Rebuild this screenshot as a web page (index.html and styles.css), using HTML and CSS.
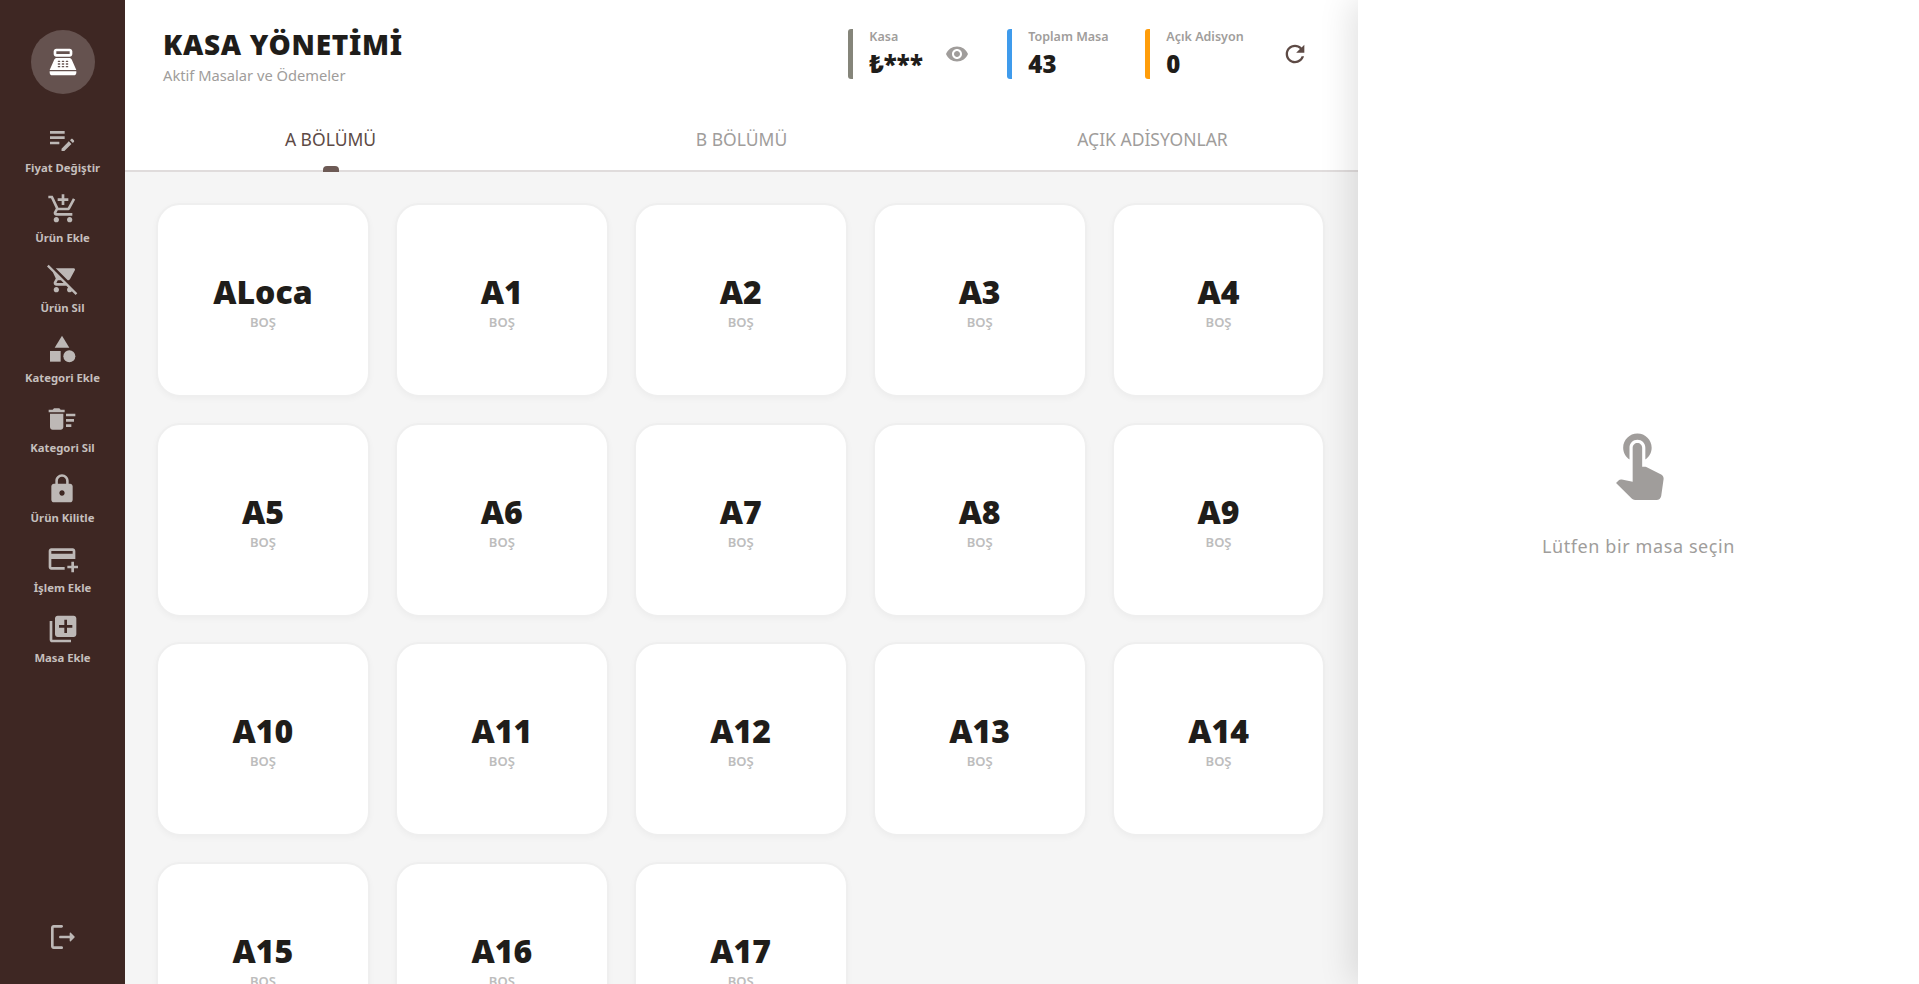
FILE: index.html
```html
<!DOCTYPE html>
<html lang="tr">

<head>
    <meta charset="UTF-8">
    <meta name="viewport" content="width=device-width, initial-scale=1.0">
    <title>Kasa Yönetimi</title>
    <link rel="stylesheet" href="styles.css">
</head>

<body>
    <nav class="sidebar">
        <div class="avatar">
            <svg viewBox="0 0 24 24"><path fill-rule="evenodd" d="M17 2H7c-1.1 0-2 .9-2 2v2c0 1.1.9 2 2 2h10c1.1 0 2-.9 2-2V4c0-1.1-.9-2-2-2zm0 4H7V4h10v2zm3 16H4c-1.1 0-2-.9-2-2v-1h20v1c0 1.1-.9 2-2 2zm-1.47-11.81C18.21 9.47 17.49 9 16.7 9H7.3c-.79 0-1.51.47-1.83 1.19L2 18h20l-3.47-7.81zM9.5 16h-1c-.28 0-.5-.22-.5-.5s.22-.5.5-.5h1c.28 0 .5.22.5.5s-.22.5-.5.5zm0-2h-1c-.28 0-.5-.22-.5-.5s.22-.5.5-.5h1c.28 0 .5.22.5.5s-.22.5-.5.5zm0-2h-1c-.28 0-.5-.22-.5-.5s.22-.5.5-.5h1c.28 0 .5.22.5.5s-.22.5-.5.5zm3 4h-1c-.28 0-.5-.22-.5-.5s.22-.5.5-.5h1c.28 0 .5.22.5.5s-.22.5-.5.5zm0-2h-1c-.28 0-.5-.22-.5-.5s.22-.5.5-.5h1c.28 0 .5.22.5.5s-.22.5-.5.5zm0-2h-1c-.28 0-.5-.22-.5-.5s.22-.5.5-.5h1c.28 0 .5.22.5.5s-.22.5-.5.5zm3 4h-1c-.28 0-.5-.22-.5-.5s.22-.5.5-.5h1c.28 0 .5.22.5.5s-.22.5-.5.5zm0-2h-1c-.28 0-.5-.22-.5-.5s.22-.5.5-.5h1c.28 0 .5.22.5.5s-.22.5-.5.5zm0-2h-1c-.28 0-.5-.22-.5-.5s.22-.5.5-.5h1c.28 0 .5.22.5.5s-.22.5-.5.5z"/></svg>
        </div>
        <a class="nav-item">
            <svg viewBox="0 0 24 24"><path d="M3 10h11v2H3zm0-2h11V6H3zm0 8h7v-2H3zm15.01-3.13.71-.71c.39-.39 1.02-.39 1.41 0l.71.71c.39.39.39 1.02 0 1.41l-.71.71-2.12-2.12zm-1.06 1.06-5.3 5.3V21h2.12l5.3-5.3-2.12-2.12z"/></svg>
            <span>Fiyat Değiştir</span>
        </a>
        <a class="nav-item">
            <svg viewBox="0 0 24 24"><path d="M11 9h2V6h3V4h-3V1h-2v3H8v2h3v3zm-4 9c-1.1 0-1.99.9-1.99 2S5.9 22 7 22s2-.9 2-2-.9-2-2-2zm10 0c-1.1 0-1.99.9-1.99 2s.89 2 1.99 2 2-.9 2-2-.9-2-2-2zm-9.83-3.25l.03-.12.9-1.63h7.45c.75 0 1.41-.41 1.75-1.03l3.86-7.01L19.42 4h-.01l-1.1 2-2.76 5H8.53l-.13-.27L6.16 6l-.95-2-.94-2H1v2h2l3.6 7.59-1.35 2.45c-.16.28-.25.61-.25.96 0 1.1.9 2 2 2h12v-2H7.42c-.13 0-.25-.11-.25-.25z"/></svg>
            <span>Ürün Ekle</span>
        </a>
        <a class="nav-item">
            <svg viewBox="0 0 24 24"><path d="M22.73 22.73 2.77 2.77 2 2l-.73-.73L0 2.54l4.39 4.39 2.21 4.66-1.35 2.45c-.16.28-.25.61-.25.96 0 1.1.9 2 2 2h7.46l1.38 1.38c-.5.36-.83.95-.83 1.62 0 1.1.89 2 1.99 2 .67 0 1.26-.33 1.62-.84L21.46 24l1.27-1.27zM7.42 15c-.14 0-.25-.11-.25-.25l.03-.12.9-1.63h2.36l2 2H7.42zm8.13-2c.75 0 1.41-.41 1.75-1.03l3.58-6.49c.08-.14.12-.31.12-.48 0-.55-.45-1-1-1H6.54l9.01 9zM7 18c-1.1 0-1.99.9-1.99 2S5.9 22 7 22s2-.9 2-2-.9-2-2-2z"/></svg>
            <span>Ürün Sil</span>
        </a>
        <a class="nav-item">
            <svg viewBox="0 0 24 24"><path d="M12 2l-5.5 9h11z"/><circle cx="17.5" cy="17.5" r="4.5"/><path d="M3 13.5h8v8H3z"/></svg>
            <span>Kategori Ekle</span>
        </a>
        <a class="nav-item">
            <svg viewBox="0 0 24 24"><path d="M15 16h4v2h-4zm0-8h7v2h-7zm0 4h6v2h-6zM3 18c0 1.1.9 2 2 2h6c1.1 0 2-.9 2-2V8H3v10zM14 5h-3l-1-1H6L5 5H2v2h12z"/></svg>
            <span>Kategori Sil</span>
        </a>
        <a class="nav-item">
            <svg viewBox="0 0 24 24"><path d="M18 8h-1V6c0-2.76-2.24-5-5-5S7 3.24 7 6v2H6c-1.1 0-2 .9-2 2v10c0 1.1.9 2 2 2h12c1.1 0 2-.9 2-2V10c0-1.1-.9-2-2-2zm-6 9c-1.1 0-2-.9-2-2s.9-2 2-2 2 .9 2 2-.9 2-2 2zm3.1-9H8.9V6c0-1.71 1.39-3.1 3.1-3.1 1.71 0 3.1 1.39 3.1 3.1v2z"/></svg>
            <span>Ürün Kilitle</span>
        </a>
        <a class="nav-item">
            <svg viewBox="0 0 24 24"><path d="M20 4H4c-1.11 0-1.99.89-1.99 2L2 18c0 1.11.89 2 2 2h10v-2H4v-6h18V6c0-1.11-.89-2-2-2zm0 4H4V6h16v2zm4 9v2h-3v3h-2v-3h-3v-2h3v-3h2v3h3z"/></svg>
            <span>İşlem Ekle</span>
        </a>
        <a class="nav-item">
            <svg viewBox="0 0 24 24"><path d="M4 6H2v14c0 1.1.9 2 2 2h14v-2H4V6zm16-4H8c-1.1 0-2 .9-2 2v12c0 1.1.9 2 2 2h12c1.1 0 2-.9 2-2V4c0-1.1-.9-2-2-2zm-1 9h-4v4h-2v-4H9V9h4V5h2v4h4v2z"/></svg>
            <span>Masa Ekle</span>
        </a>
        <a class="logout">
            <svg viewBox="0 0 24 24"><path d="M5 5h6c.55 0 1-.45 1-1s-.45-1-1-1H5c-1.1 0-2 .9-2 2v14c0 1.1.9 2 2 2h6c.55 0 1-.45 1-1s-.45-1-1-1H5V5z"/><path d="M20.65 11.65l-2.79-2.79c-.32-.32-.86-.1-.86.35V11h-7c-.55 0-1 .45-1 1s.45 1 1 1h7v1.79c0 .45.54.67.85.35l2.79-2.79c.2-.19.2-.51.01-.7z"/></svg>
        </a>
    </nav>

    <main class="main">
        <header class="topbar">
            <div class="heading">
                <h1>KASA YÖNETİMİ</h1>
                <p>Aktif Masalar ve Ödemeler</p>
            </div>
            <div class="stats">
                <div class="stat stat-kasa">
                    <div class="stat-text">
                        <span class="stat-label">Kasa</span>
                        <strong class="stat-value">₺***</strong>
                    </div>
                    <svg class="eye" viewBox="0 0 24 24"><path d="M12 4.5C7 4.5 2.73 7.61 1 12c1.73 4.39 6 7.5 11 7.5s9.27-3.11 11-7.5c-1.73-4.39-6-7.5-11-7.5zM12 17c-2.76 0-5-2.24-5-5s2.24-5 5-5 5 2.24 5 5-2.24 5-5 5zm0-8c-1.66 0-3 1.34-3 3s1.34 3 3 3 3-1.34 3-3-1.34-3-3-3z"/></svg>
                </div>
                <div class="stat stat-masa">
                    <div class="stat-text">
                        <span class="stat-label">Toplam Masa</span>
                        <strong class="stat-value">43</strong>
                    </div>
                </div>
                <div class="stat stat-adisyon">
                    <div class="stat-text">
                        <span class="stat-label">Açık Adisyon</span>
                        <strong class="stat-value">0</strong>
                    </div>
                </div>
                <svg class="refresh" viewBox="0 0 24 24"><path d="M17.65 6.35C16.2 4.9 14.21 4 12 4c-4.42 0-7.99 3.58-7.99 8s3.57 8 7.99 8c3.73 0 6.84-2.55 7.73-6h-2.08c-.82 2.33-3.04 4-5.65 4-3.31 0-6-2.69-6-6s2.69-6 6-6c1.66 0 3.14.69 4.22 1.78L13 11h7V4l-2.35 2.35z"/></svg>
            </div>
        </header>

        <div class="tabs">
            <div class="tab active">A BÖLÜMÜ</div>
            <div class="tab">B BÖLÜMÜ</div>
            <div class="tab">AÇIK ADİSYONLAR</div>
        </div>

        <section class="tables">
            <div class="table-card"><b>ALoca</b><span>BOŞ</span></div>
            <div class="table-card"><b>A1</b><span>BOŞ</span></div>
            <div class="table-card"><b>A2</b><span>BOŞ</span></div>
            <div class="table-card"><b>A3</b><span>BOŞ</span></div>
            <div class="table-card"><b>A4</b><span>BOŞ</span></div>
            <div class="table-card"><b>A5</b><span>BOŞ</span></div>
            <div class="table-card"><b>A6</b><span>BOŞ</span></div>
            <div class="table-card"><b>A7</b><span>BOŞ</span></div>
            <div class="table-card"><b>A8</b><span>BOŞ</span></div>
            <div class="table-card"><b>A9</b><span>BOŞ</span></div>
            <div class="table-card"><b>A10</b><span>BOŞ</span></div>
            <div class="table-card"><b>A11</b><span>BOŞ</span></div>
            <div class="table-card"><b>A12</b><span>BOŞ</span></div>
            <div class="table-card"><b>A13</b><span>BOŞ</span></div>
            <div class="table-card"><b>A14</b><span>BOŞ</span></div>
            <div class="table-card"><b>A15</b><span>BOŞ</span></div>
            <div class="table-card"><b>A16</b><span>BOŞ</span></div>
            <div class="table-card"><b>A17</b><span>BOŞ</span></div>
        </section>
    </main>

    <aside class="detail">
        <svg viewBox="0 0 24 24"><path d="M9 11.24V7.5C9 6.12 10.12 5 11.5 5S14 6.12 14 7.5v3.74c1.21-.81 2-2.18 2-3.74C16 5.01 13.99 3 11.5 3S7 5.01 7 7.5c0 1.56.79 2.93 2 3.74zm9.84 4.63l-4.54-2.26c-.17-.07-.35-.11-.54-.11H13v-6c0-.83-.67-1.5-1.5-1.5S10 6.67 10 7.5v10.74l-3.43-.72c-.08-.01-.15-.03-.24-.03-.31 0-.59.13-.79.33l-.79.8 4.94 4.94c.27.27.65.44 1.06.44h6.79c.75 0 1.36-.55 1.47-1.28l.75-5.27c.01-.07.02-.14.02-.2 0-.62-.38-1.16-.91-1.38z"/></svg>
        <p>Lütfen bir masa seçin</p>
    </aside>
</body>

</html>
```

FILE: styles.css
```css
* {
    box-sizing: border-box;
}

html,
body {
    height: 100%;
}

body {
    margin: 0;
    display: flex;
    overflow: hidden;
    font-family: "Noto Sans", "Open Sans", sans-serif;
    background-color: #ffffff;
    color: #1f1d1a;
}

/* sol menu */
.sidebar {
    width: 125px;
    flex-shrink: 0;
    height: 100%;
    background-color: #3e2723;
    display: flex;
    flex-direction: column;
    align-items: center;
    padding-top: 30px;
    padding-bottom: 33px;
}

.avatar {
    width: 64px;
    height: 64px;
    border-radius: 50%;
    background-color: #65524f;
    display: flex;
    align-items: center;
    justify-content: center;
    margin-bottom: 28.5px;
}

.avatar svg {
    width: 32px;
    height: 32px;
    fill: #ffffff;
}

.nav-item {
    height: 70px;
    display: flex;
    flex-direction: column;
    align-items: center;
    color: #c5bfbd;
}

.nav-item svg {
    width: 32px;
    height: 32px;
    fill: #bdb8b6;
}

.nav-item span {
    margin-top: 5px;
    font-size: 11.3px;
    line-height: 15px;
    font-weight: 700;
    white-space: nowrap;
}

.logout {
    margin-top: auto;
    height: 30px;
}

.logout svg {
    width: 32px;
    height: 32px;
    fill: #bdb8b6;
}

/* orta alan */
.main {
    flex: 1;
    min-width: 0;
    height: 100%;
    background-color: #f5f5f5;
    display: flex;
    flex-direction: column;
}

.topbar {
    height: 108px;
    flex-shrink: 0;
    background-color: #ffffff;
    display: flex;
    justify-content: space-between;
    align-items: flex-start;
    padding: 29px 49px 0 38px;
}

.heading h1 {
    margin: 0;
    font-size: 28px;
    line-height: 30px;
    font-weight: 900;
    letter-spacing: 0.7px;
}

.heading p {
    margin: 7px 0 0;
    font-size: 14.7px;
    line-height: 18px;
    color: #a09d9b;
}

.stats {
    display: flex;
    align-items: flex-start;
}

.stat {
    height: 50px;
    display: flex;
    border-left: 5px solid #85857a;
    border-radius: 3px;
    padding-left: 16px;
    margin-right: 38px;
}

.stat-masa {
    border-left-color: #3f9bec;
    margin-right: 36.8px;
}

.stat-adisyon {
    border-left-color: #ff9d0a;
    margin-right: 37.4px;
}

.stat-text {
    display: flex;
    flex-direction: column;
}

.stat-label {
    font-size: 12.5px;
    line-height: 16px;
    font-weight: 600;
    color: #a09d9b;
}

.stat-value {
    margin-top: 4px;
    font-size: 24px;
    line-height: 30px;
    font-weight: 900;
    letter-spacing: 0.3px;
}

.eye {
    width: 24px;
    height: 24px;
    fill: #a09d9b;
    margin: 13px 0 0 22px;
}

.refresh {
    width: 28px;
    height: 28px;
    fill: #5d4a45;
    margin-top: 11px;
}

.tabs {
    height: 64px;
    flex-shrink: 0;
    background-color: #ffffff;
    border-bottom: 2px solid #e0dcdc;
    display: flex;
}

.tab {
    flex: 1;
    position: relative;
    text-align: center;
    font-size: 17.5px;
    line-height: 62px;
    color: #a09d9b;
}

.tab.active {
    color: #5d4a45;
}

.tab.active::after {
    content: "";
    position: absolute;
    left: 50%;
    bottom: -2px;
    width: 16px;
    height: 6px;
    margin-left: -8px;
    background-color: #6d5a55;
    border-radius: 4px 4px 0 0;
}

.tables {
    flex: 1;
    min-height: 0;
    overflow: hidden;
    display: grid;
    grid-template-columns: repeat(5, 1fr);
    grid-auto-rows: 194px;
    gap: 25.6px 25px;
    padding: 31px 32.5px 31px 31px;
}

.table-card {
    background-color: #ffffff;
    border: 2px solid #efefef;
    border-radius: 24px;
    box-shadow: 0 2px 6px rgba(0, 0, 0, 0.03);
    display: flex;
    flex-direction: column;
    align-items: center;
    justify-content: center;
    padding-top: 2px;
}

.table-card b {
    font-size: 32px;
    line-height: 40px;
    font-weight: 900;
}

.table-card span {
    margin-top: 2px;
    font-size: 13px;
    line-height: 16px;
    font-weight: 600;
    color: #bdbdbd;
}

/* sag panel */
.detail {
    width: 561px;
    flex-shrink: 0;
    height: 100%;
    background-color: #ffffff;
    box-shadow: -6px 0 32px rgba(0, 0, 0, 0.12);
    position: relative;
    display: flex;
    flex-direction: column;
    align-items: center;
    padding-top: 423.5px;
}

.detail svg {
    width: 76px;
    height: 76px;
    fill: #a09d9b;
}

.detail p {
    margin: 34.5px 0 0;
    font-size: 18px;
    line-height: 24px;
    letter-spacing: 0.6px;
    color: #a09d9b;
}
```
